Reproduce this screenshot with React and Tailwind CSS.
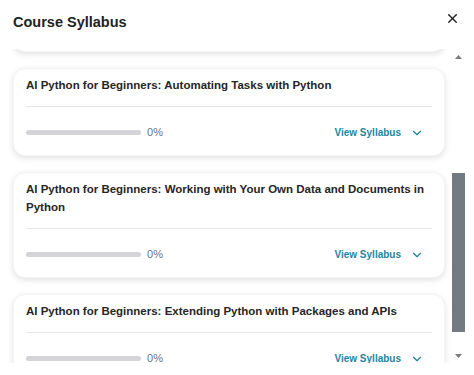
import React, { useEffect, useRef } from 'react';
import { X, ChevronDown } from 'lucide-react';

const modules = [
  { id: 'intro', title: 'AI Python for Beginners: Getting Started with AI Python for Beginners and Course Resources', progress: 0 },
  { id: 'basics', title: 'AI Python for Beginners: Basics of AI Python Coding', progress: 0 },
  { id: 'automating', title: 'AI Python for Beginners: Automating Tasks with Python', progress: 0 },
  { id: 'data', title: 'AI Python for Beginners: Working with Your Own Data and Documents in Python', progress: 0 },
  { id: 'packages', title: 'AI Python for Beginners: Extending Python with Packages and APIs', progress: 0 },
];

function ModuleCard({ title, progress, cardRef }) {
  return (
    <div
      ref={cardRef}
      className="rounded-xl border border-gray-100 bg-white px-3 pt-[7px] shadow-[0_2px_6px_rgba(0,0,0,0.12)]"
    >
      <h3 className="mb-[12px] text-[11.5px] font-bold leading-[18px] text-[#262626]">{title}</h3>
      <div className="border-t border-gray-200" />
      <div className="flex h-[48px] items-center pt-[3px]">
        <div className="h-[5px] w-[115px] rounded-full bg-[#d4d4d8]">
          <div className="h-full rounded-full bg-[#1b87a0]" style={{ width: `${progress}%` }} />
        </div>
        <span className="ml-[6px] text-[11px] text-gray-500">{progress}%</span>
        <button className="ml-auto flex items-center gap-[9px] pr-[8px] text-[10px] font-bold text-[#1b87a0]">
          View Syllabus
          <ChevronDown size={14} strokeWidth={2} />
        </button>
      </div>
    </div>
  );
}

function Arrow({ down }) {
  return (
    <div className="flex h-[15px] items-center justify-center">
      <svg width="7" height="4" viewBox="0 0 7 4">
        <polygon points={down ? '0,0 7,0 3.5,4' : '0,4 7,4 3.5,0'} fill="#7a7a7a" />
      </svg>
    </div>
  );
}

export default function App() {
  const listRef = useRef(null);
  const anchorRef = useRef(null);

  useEffect(() => {
    // scroll so the "Automating Tasks" card sits just under the header
    const list = listRef.current;
    const card = anchorRef.current;
    if (!list || !card) return;
    const offset = card.getBoundingClientRect().top - list.getBoundingClientRect().top;
    list.scrollTop += offset - 19;
  }, []);

  return (
    <div className="flex h-screen flex-col bg-white font-['Liberation_Sans',Arial,sans-serif]">
      <div className="flex h-[49px] shrink-0 items-start justify-between pl-[13px] pr-[14px]">
        <h2 className="mt-[12px] text-[14.5px] font-bold leading-[20px] text-[#222]">Course Syllabus</h2>
        <button className="mt-[11px] text-[#222]">
          <X size={15} strokeWidth={2.2} />
        </button>
      </div>
      <div className="mx-2 mb-[12px] flex min-h-0 flex-1">
        <div ref={listRef} className="min-w-0 flex-1 overflow-y-auto [scrollbar-width:none]">
          <div className="flex flex-col gap-4 py-6 pl-[5px] pr-[6px]">
            {modules.map((m) => (
              <ModuleCard
                key={m.id}
                title={m.title}
                progress={m.progress}
                cardRef={m.id === 'automating' ? anchorRef : undefined}
              />
            ))}
          </div>
        </div>
        <div className="flex w-[15px] shrink-0 flex-col">
          <Arrow />
          <div className="flex-1 px-px">
            <div className="mt-[109px] h-[159px] bg-[#747a83]" />
          </div>
          <Arrow down />
        </div>
      </div>
    </div>
  );
}
